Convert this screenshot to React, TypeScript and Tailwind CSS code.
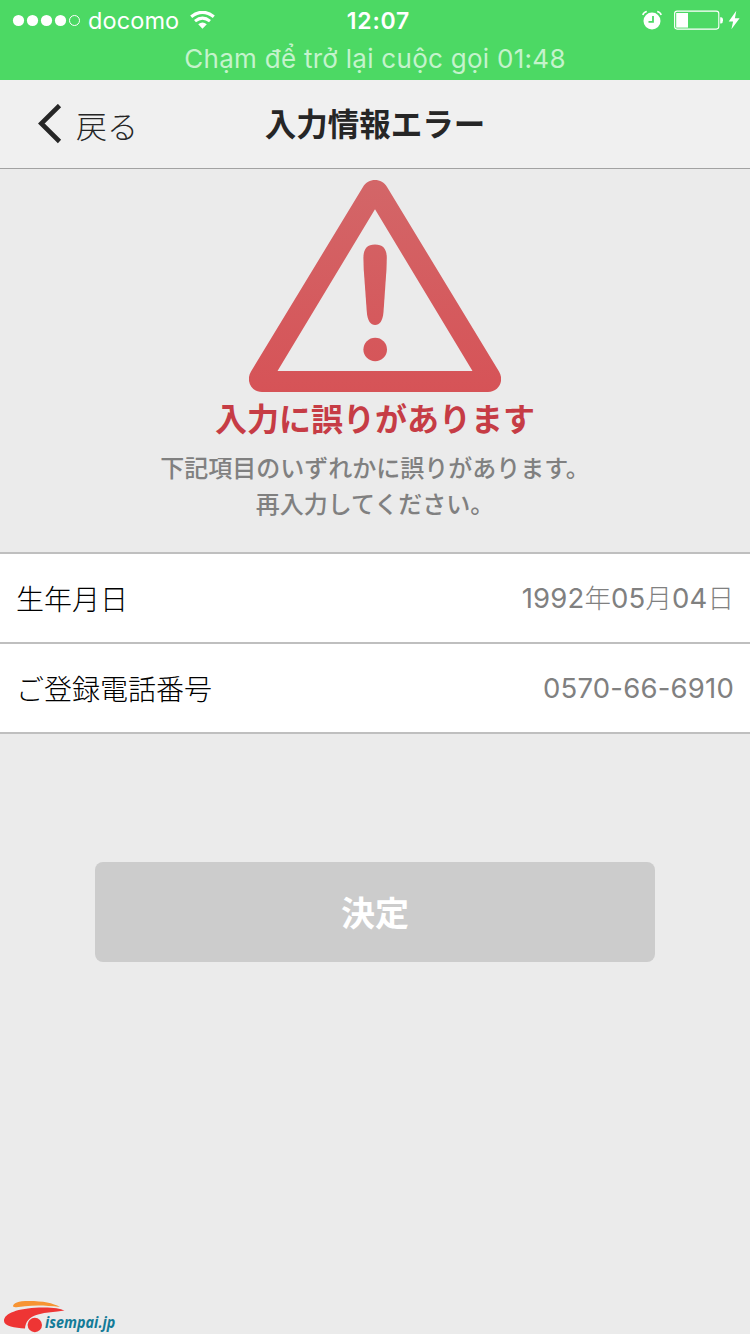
import React from 'react';

function StatusBar() {
  return (
    <header className="h-20 bg-[#4cd964] text-white font-['Inter','Noto_Sans',sans-serif]">
      <div className="grid h-10 grid-cols-[1fr_auto_1fr] items-center pl-3 pr-[10px]">
        <div className="flex items-center">
          <svg className="h-4 w-[70px] shrink-0" viewBox="0 0 70 16" fill="#fff">
            <circle cx="6.5" cy="8.5" r="5.6" />
            <circle cx="20.5" cy="8.5" r="5.6" />
            <circle cx="34.5" cy="8.5" r="5.6" />
            <circle cx="48.5" cy="8.5" r="5.6" />
            <circle cx="62.5" cy="8.5" r="5" fill="none" stroke="#fff" strokeWidth="1" />
          </svg>
          <span className="ml-[6px] w-[102px] pt-[2px] text-[23.5px] leading-[38px] tracking-[0.1px]">docomo</span>
          <svg className="h-[18px] w-[26px] shrink-0" viewBox="0 0 26 18">
            <path d="M1.2 5.8Q12.5-3.2 23.8 5.8" fill="none" stroke="#fff" strokeWidth="3.2" />
            <path d="M5 10.2Q12.5 4 20 10.2" fill="none" stroke="#fff" strokeWidth="3" />
            <path d="M8.2 13.2Q12.5 9.6 16.8 13.2L12.5 17.8Z" fill="#fff" />
          </svg>
        </div>
        <span className="pt-[2px] pl-[5px] text-[23px] leading-[38px] font-semibold tracking-[0.8px]">12:07</span>
        <div className="flex items-center justify-end">
          <svg className="h-5 w-5 shrink-0" viewBox="0 0 20 20">
            <circle cx="10" cy="11" r="8.5" fill="#fff" />
            <path d="M11 6V11.8H6.5" fill="none" stroke="#4cd964" strokeWidth="1.8" />
            <path d="M.8 5Q1.6 2 4.8 1.4M15.2 1.4Q18.4 2 19.2 5" fill="none" stroke="#fff" strokeWidth="1.5" />
          </svg>
          <svg className="ml-3 h-5 w-[50px] shrink-0" viewBox="0 0 50 20">
            <rect x=".6" y="1.1" width="44.2" height="18" rx="2.5" fill="none" stroke="#fff" strokeWidth="1.1" />
            <path d="M2.2 3H14V17.6H2.2Z" fill="#fff" />
            <path d="M46.2 7.2H47Q49 7.2 49 10.2T47 13.6H46.2Z" fill="#fff" />
          </svg>
          <svg className="ml-1 h-5 w-3 shrink-0" viewBox="0 0 12 20" fill="#fff">
            <path d="M8.3.8L.7 11.4H5.1L3.4 19.2L11.6 8.2H6.9Z" />
          </svg>
        </div>
      </div>
      <p className="h-10 text-center text-[26px] leading-[38px] tracking-[0.28px] text-[#c4f3cc]">
        Chạm để trở lại cuộc gọi 01:48
      </p>
    </header>
  );
}

function NavBar() {
  return (
    <nav className="grid h-[89px] grid-cols-[1fr_auto_1fr] border-b border-[#a2a2a2] bg-[#f0f0f0] text-[#262626]">
      <button className="flex items-center pl-[38px] text-left">
        <svg className="h-10 w-6" viewBox="0 0 24 40">
          <path d="M21.5 1.5L3.3 19.5L21.5 37.5" fill="none" stroke="#262626" strokeWidth="4.6" />
        </svg>
        <span className="ml-[14px] pt-px text-[31px] leading-10 font-light">戻る</span>
      </button>
      <h1 className="text-[31.5px] leading-[85px] font-bold">入力情報エラー</h1>
    </nav>
  );
}

function WarningIcon() {
  return (
    <svg className="h-[212px] w-[252px]" viewBox="249 180 252 212" fill="url(#warning)">
      <defs>
        <linearGradient id="warning" gradientUnits="userSpaceOnUse" x1="0" y1="180" x2="0" y2="392">
          <stop offset="0" stopColor="#d36668" />
          <stop offset="1" stopColor="#d65357" />
        </linearGradient>
      </defs>
      <path
        fillRule="evenodd"
        d="M362.8 187.3C368.3 177.6 381.7 177.6 387.2 187.3L499 371.5C504.5 380.5 499 392 488 392H262C251 392 245.5 380.5 251 371.5ZM375 209.3L277.5 371H472.5Z"
      />
      <path d="M363.4 258C363.4 249 367 244.5 375 244.5S386.8 249 386.8 258L386.5 269L383.5 312C382.8 321 379.500 325 375.100 325S367.500 321 366.800 312L363.700 269Z" />
      <circle cx="375.2" cy="349.5" r="11.8" />
    </svg>
  );
}

function Row({ label, children }: { label: string; children: React.ReactNode }) {
  return (
    <div className="flex h-[90px] items-center justify-between border-b-2 border-[#bfbfbf] bg-white pl-4 pr-4">
      <dt className="text-[28px] leading-10 font-light text-black">{label}</dt>
      <dd className="text-[27.5px] leading-10 tracking-[0.2px] text-[#808080] font-['Inter','Noto_Sans_CJK_JP',sans-serif]">
        {children}
      </dd>
    </div>
  );
}

function Unit({ children }: { children: string }) {
  return <span className="text-[26.5px] font-light tracking-normal">{children}</span>;
}

function Logo() {
  return (
    <footer className="mt-auto flex h-[36px] items-end pl-1">
      <svg className="h-9 w-[61px]" viewBox="4 1298 61 36">
        <path d="M13 1306.5C13 1303 18 1301 29 1301C43 1301 53 1303 60 1307C47 1305.5 36 1305 25 1306.3C21 1306.8 15 1308 13 1306.5Z" fill="#f79433" />
        <path d="M4 1321C4 1313 18 1308.5 39 1307.5C51 1307 60 1308.2 64.5 1310.5C55 1312 46 1312 38 1314.5C29 1317 25.5 1322 25 1328.500C15 1328 4 1326 4 1321Z" fill="#ee3534" />
        <circle cx="34.8" cy="1325" r="7.2" fill="#ee3534" />
      </svg>
      <span className="-ml-5 origin-left scale-x-[0.87] text-[16.5px] leading-6 font-bold italic text-[#147b98] font-['Open_Sans','Noto_Sans',sans-serif]">
        isempai.jp
      </span>
    </footer>
  );
}

export default function App() {
  return (
    <div className="flex h-[1334px] w-[750px] flex-col overflow-hidden bg-[#ebebeb] font-['Noto_Sans_CJK_JP',sans-serif]">
      <StatusBar />
      <NavBar />
      <main>
        <section className="flex h-[383px] flex-col items-center pt-[11px] text-center">
          <WarningIcon />
          <h2 className="mt-px text-[32px] leading-[48px] font-bold text-[#c63c45]">入力に誤りがあります</h2>
          <p className="mt-[8px] text-[24px] leading-9 font-medium text-[#808080]">
            下記項目のいずれかに誤りがあります。
            <br />
            再入力してください。
          </p>
        </section>
        <dl className="border-t-2 border-[#bfbfbf]">
          <Row label="生年月日">
            1992<Unit>年</Unit>05<Unit>月</Unit>04<Unit>日</Unit>
          </Row>
          <Row label="ご登録電話番号">0570-66-6910</Row>
        </dl>
        <button className="mx-auto mt-32 block h-[100px] w-[560px] rounded-lg bg-[#cccccc] text-[34px] leading-[98px] font-bold text-white">
          決定
        </button>
      </main>
      <Logo />
    </div>
  );
}
